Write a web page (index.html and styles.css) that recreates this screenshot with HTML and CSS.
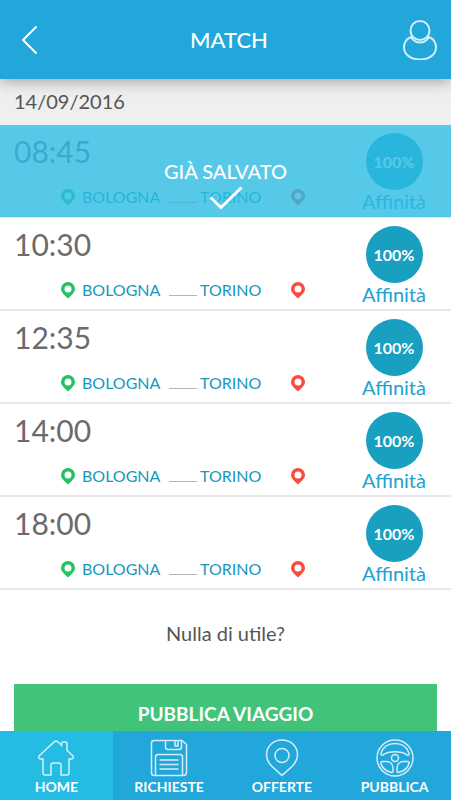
FILE: index.html
```html
<!DOCTYPE html>
<html lang="it">
<head>
<meta charset="utf-8">
<meta name="viewport" content="width=device-width, initial-scale=1">
<title>Match</title>
<link rel="stylesheet" href="styles.css">
</head>
<body>
<svg class="defs" aria-hidden="true">
  <symbol id="pin" viewBox="0 0 14 17">
    <path fill-rule="evenodd" d="M7 0a7 7 0 0 1 7 7c0 3-2.6 5.300-7 9.500C2.600 12.300 0 10 0 7a7 7 0 0 1 7-7zM7 3.500a3.500 3.500 0 1 0 0 7a3.500 3.500 0 0 0 0-7z"/>
  </symbol>
</svg>
<header class="topbar">
  <button class="icon-button" aria-label="Indietro"><svg width="18" height="30" viewBox="0 0 18 30"><path d="M15.500 1.500L2 15l13.500 13.500"/></svg></button>
  <h1 class="title">MATCH</h1>
  <button class="icon-button soft" aria-label="Profilo"><svg width="34" height="40" viewBox="0 0 34 40"><circle cx="17" cy="10.500" r="9.500"/><path d="M8 17C3 19 1 23 1 27.500c0 7 7 12 16 12s16-5 16-12c0-4.500-2-8.500-7-10.500c-2 3.500-5 5.500-9 5.500s-7-2-9-5.500z"/></svg></button>
</header>
<main class="content">
  <h2 class="date">14/09/2016</h2>
  <ul class="trips">
    <li class="trip">
      <div class="info"><time class="time">08:45</time><div class="route"><svg class="pin start"><use href="#pin"/></svg><span class="from">BOLOGNA</span><span class="dash"></span><span class="to">TORINO</span><svg class="pin end"><use href="#pin"/></svg></div></div>
      <div class="match"><span class="score">100%</span><span class="label">Affinità</span></div>
      <div class="saved"><span>GIÀ SALVATO</span><svg width="34" height="24" viewBox="0 0 34 24"><path d="M1.500 11.500L12 21.500L32.500 1.500"/></svg></div>
    </li>
    <li class="trip">
      <div class="info"><time class="time">10:30</time><div class="route"><svg class="pin start"><use href="#pin"/></svg><span class="from">BOLOGNA</span><span class="dash"></span><span class="to">TORINO</span><svg class="pin end"><use href="#pin"/></svg></div></div>
      <div class="match"><span class="score">100%</span><span class="label">Affinità</span></div>
    </li>
    <li class="trip">
      <div class="info"><time class="time">12:35</time><div class="route"><svg class="pin start"><use href="#pin"/></svg><span class="from">BOLOGNA</span><span class="dash"></span><span class="to">TORINO</span><svg class="pin end"><use href="#pin"/></svg></div></div>
      <div class="match"><span class="score">100%</span><span class="label">Affinità</span></div>
    </li>
    <li class="trip">
      <div class="info"><time class="time">14:00</time><div class="route"><svg class="pin start"><use href="#pin"/></svg><span class="from">BOLOGNA</span><span class="dash"></span><span class="to">TORINO</span><svg class="pin end"><use href="#pin"/></svg></div></div>
      <div class="match"><span class="score">100%</span><span class="label">Affinità</span></div>
    </li>
    <li class="trip">
      <div class="info"><time class="time">18:00</time><div class="route"><svg class="pin start"><use href="#pin"/></svg><span class="from">BOLOGNA</span><span class="dash"></span><span class="to">TORINO</span><svg class="pin end"><use href="#pin"/></svg></div></div>
      <div class="match"><span class="score">100%</span><span class="label">Affinità</span></div>
    </li>
  </ul>
  <p class="prompt">Nulla di utile?</p>
  <button class="publish">PUBBLICA VIAGGIO</button>
</main>
<nav class="tabs">
  <a class="tab active" href="#home"><svg viewBox="0 0 38 38"><path d="M6 20H3.500c-2 0-2.500-2-1-3.500L17 3c1.300-1.300 2.700-1.300 4 0l3.500 3.300V4.500c0-1 .5-1.500 1.500-1.500h2.500c1 0 1.500.5 1.500 1.500v7l5.500 5c1.500 1.500 1 3.500-1 3.500H32v14c0 1.300-.7 2-2 2h-6V26c0-1.500-.7-2-2-2h-6c-1.300 0-2 .5-2 2v10H8c-1.300 0-2-.7-2-2z"/></svg>HOME</a>
  <a class="tab" href="#richieste"><svg viewBox="0 0 38 38"><path d="M4 1.500h28l4.500 4v28c0 2-1 3-3 3H4c-1.500 0-2.500-1-2.500-2.500V4c0-1.500 1-2.500 2.500-2.500zM15.500 1.500V8c0 1.500 1 2.500 2.500 2.500h11c1.500 0 2.500-1 2.500-2.500V1.500M25 1.500V7h3V1.500M5.500 36V18c0-1.500 1-2.500 2.500-2.500h22c1.500 0 2.500 1 2.500 2.500v18M9.500 21h19M9.500 25.500h19M9.500 30h19"/></svg>RICHIESTE</a>
  <a class="tab" href="#offerte"><svg viewBox="0 0 38 38"><path d="M19 1c9 0 15.500 6.500 15.500 15S27 29 19 36.500C11 29 3.500 24.500 3.500 16S10 1 19 1z"/><circle cx="19" cy="16.500" r="7"/></svg>OFFERTE</a>
  <a class="tab" href="#pubblica"><svg viewBox="0 0 38 38"><circle cx="19" cy="19" r="18"/><circle cx="19" cy="19" r="3.500"/><path d="M5 14.500C7 8 12.500 4.500 19 4.500S31 8 33 14.500c.5 1.500-.5 2-2 1.500-2-1-3-2-5-2.500-5-1-9-1-14 0-2 .5-3 1.500-5 2.500-1.500.5-2.500 0-2-1.500zM6.500 22.500h4c4 0 6.500 3 6.500 7V32c0 1.500-.7 1.700-2 1.300C10 32 6 28.500 5 24.500c-.3-1.300 0-2 1.500-2zM31.500 22.500h-4c-4 0-6.500 3-6.500 7V32c0 1.500.7 1.700 2 1.300C28 32 32 28.500 33 24.500c.3-1.300 0-2-1.500-2z"/></svg>PUBBLICA</a>
</nav>
</body>
</html>
```
FILE: styles.css
```css
* {
  box-sizing: border-box;
}

body {
  margin: 0;
  height: 100vh;
  display: flex;
  flex-direction: column;
  background: #fff;
  color: #555;
  font-family: Lato, "Liberation Sans", sans-serif;
  font-size: 20px;
  line-height: 24px;
}

button {
  border: 0;
  font: inherit;
  color: inherit;
}

.defs {
  position: absolute;
  width: 0;
  height: 0;
}

.topbar {
  position: relative;
  z-index: 1;
  flex: none;
  display: grid;
  grid-template-columns: 1fr auto 1fr;
  align-items: center;
  height: 79px;
  padding: 0 14px 0 21px;
  background: #22a7da;
  color: #fff;
  box-shadow: 0 2px 14px rgba(0, 0, 0, 0.35);
}

.title {
  margin: 0;
  font-size: 22px;
  font-weight: 500;
}

.icon-button {
  justify-self: start;
  padding: 0;
  background: none;
  line-height: 0;
}

.icon-button svg,
.saved svg,
.tab svg {
  fill: none;
  stroke: currentColor;
  stroke-width: 2;
}

.icon-button.soft {
  justify-self: end;
  opacity: 0.8;
}

.content {
  flex: 1;
  min-height: 0;
  overflow-y: auto;
  scrollbar-width: none;
}

.date {
  margin: 0;
  padding: 10px 14px 12px;
  background: #efefef;
  font-size: 20px;
  font-weight: 400;
}

.trips {
  margin: 0;
  padding: 0;
  list-style: none;
}

.trip {
  position: relative;
  display: flex;
  justify-content: space-between;
  padding: 8px 22px 0 14px;
  height: 93px;
  border-bottom: 2px solid #e8e8e8;
}

.time {
  display: block;
  color: #6b6b6b;
  font-size: 30px;
  line-height: 36px;
}

.route {
  display: flex;
  align-items: center;
  margin: 18px 0 0 47px;
  color: #1698bb;
  font-size: 16px;
  line-height: 20px;
}

.pin {
  width: 14px;
  height: 17px;
}

.start {
  margin-right: 7px;
  fill: #23c363;
}

.from {
  width: 87px;
}

.dash {
  align-self: flex-end;
  width: 28px;
  margin: 0 3px 4px 0;
  border-bottom: 1px solid #b5b5b5;
}

.to {
  width: 91px;
}

.end {
  fill: #fb4b3f;
}

.match {
  display: flex;
  flex-direction: column;
  align-items: center;
  width: 70px;
  color: #22a2d2;
}

.score {
  width: 57px;
  height: 57px;
  border-radius: 50%;
  background: #19a0c0;
  color: #fff;
  font-size: 16px;
  font-weight: 700;
  line-height: 57px;
  text-align: center;
}

.label {
  line-height: 22px;
}

.saved {
  position: absolute;
  inset: 0 0 -1px;
  display: flex;
  flex-direction: column;
  align-items: center;
  padding-top: 34px;
  background: rgba(44, 187, 227, 0.8);
  color: #fff;
  font-weight: 500;
}

.saved svg {
  margin-top: 3px;
  stroke-width: 3;
}

.prompt {
  margin: 0;
  padding: 31px 14px 39px;
  text-align: center;
}

.publish {
  display: block;
  width: calc(100% - 28px);
  height: 60px;
  margin: 0 14px 14px;
  background: #41c479;
  color: #fff;
  font-size: 19px;
  font-weight: 700;
}

.tabs {
  flex: none;
  display: grid;
  grid-template-columns: repeat(4, 1fr);
  height: 69px;
  background: #22a7da;
}

.tab {
  display: flex;
  flex-direction: column;
  align-items: center;
  padding-top: 8px;
  color: #fff;
  font-size: 14px;
  font-weight: 700;
  line-height: 20px;
  text-decoration: none;
}

.tab.active {
  background: #25bce4;
}

.tab svg {
  width: 38px;
  height: 38px;
  stroke-width: 1.5;
  opacity: 0.8;
}
```
